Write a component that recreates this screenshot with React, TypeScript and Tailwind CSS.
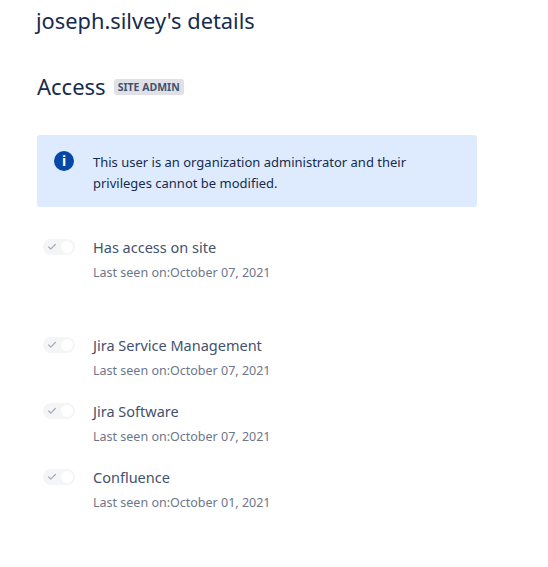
import { Check } from "lucide-react";

const products = [
  { name: "Jira Service Management", seen: "October 07, 2021" },
  { name: "Jira Software", seen: "October 07, 2021" },
  { name: "Confluence", seen: "October 01, 2021" },
];

function Toggle() {
  return (
    <div className="flex h-4 w-8 shrink-0 items-center justify-between rounded-full bg-[#f4f5f7] pl-1 pr-0.5 mt-px">
      <Check className="h-2.5 w-2.5 text-[#a5adba]" strokeWidth={3} />
      <div className="h-3 w-3 rounded-full bg-white" />
    </div>
  );
}

function AccessRow({ name, seen }: { name: string; seen: string }) {
  return (
    <div className="flex h-[66px] items-start">
      <div className="flex w-[56px] shrink-0 pl-[6px]">
        <Toggle />
      </div>
      <div className="-mt-px">
        <p className="text-[14.5px] leading-[20px] text-[#42526e]">{name}</p>
        <p className="mt-[8px] text-[12.5px] leading-[16px] text-[#6b778c]">Last seen on:{seen}</p>
      </div>
    </div>
  );
}

export default function App() {
  return (
    <div className="min-h-[567px] w-[548px] bg-white pl-[37px] font-['Noto_Sans',sans-serif]">
      <h1 className="pt-[7px] text-[21.8px] leading-[28px] text-[#172b4d] -ml-px">joseph.silvey's details</h1>
      <div className="mt-[37px] flex items-center gap-2">
        <h2 className="text-[22px] leading-[28px] text-[#172b4d]">Access</h2>
        <span className="mt-[2px] rounded-[3px] bg-[#dfe1e6] px-1 text-[10.5px] font-bold leading-[16px] text-[#42526e]">SITE ADMIN</span>
      </div>
      <div className="mt-[35px] flex h-[72px] w-[440px] rounded-[3px] bg-[#deebff] pl-[17px] pt-4">
        <div className="flex h-5 w-5 shrink-0 items-center justify-center rounded-full bg-[#0747a6] text-[14px] font-bold leading-none text-white">i</div>
        <p className="ml-[19px] mt-px text-[13px] leading-[21px] text-[#172b4d]">
          This user is an organization administrator and their<br />privileges cannot be modified.
        </p>
      </div>
      <div className="mt-[31px] h-[98px]">
        <AccessRow name="Has access on site" seen="October 07, 2021" />
      </div>
      {products.map((p) => (
        <AccessRow key={p.name} name={p.name} seen={p.seen} />
      ))}
    </div>
  );
}
